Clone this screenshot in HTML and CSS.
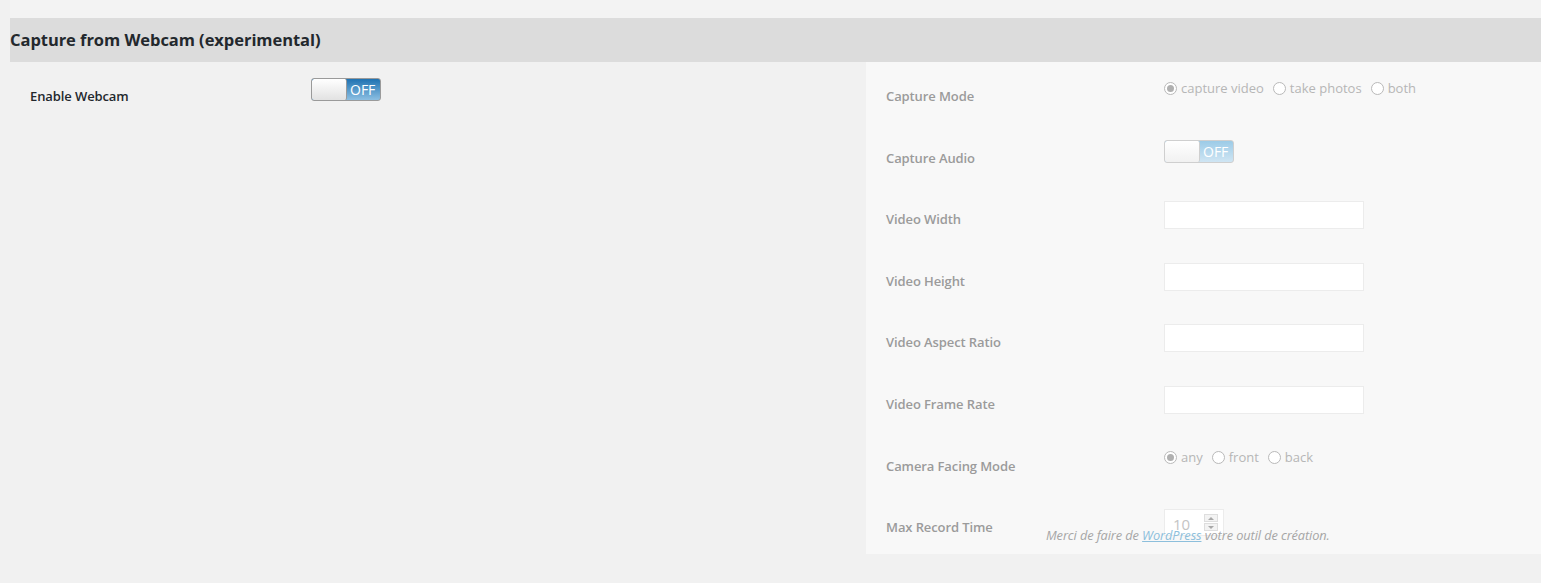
FILE: index.html
```html
<!DOCTYPE html><html lang="fr">
<head>
  <meta charset="UTF-8" />
  <title>Capture from Webcam</title>
  <link rel="stylesheet" href="styles.css">
</head>
<body>
<div class="wrap">
  <div class="top-strip"></div>
  <h2 class="section-title">Capture from Webcam (experimental)</h2>

  <div class="section-body">
    <div class="form-table main-col">
      <div class="row">
        <div class="th">Enable Webcam</div>
        <div class="td"><span class="toggle"><span class="knob"></span><span class="state">OFF</span></span></div>
      </div>
    </div>

    <div class="form-table sub-panel">
      <div class="row">
        <div class="th">Capture Mode</div>
        <div class="td radios">
          <span class="radio checked"></span><span class="opt">capture video</span>
          <span class="radio"></span><span class="opt">take photos</span>
          <span class="radio"></span><span class="opt">both</span>
        </div>
      </div>
      <div class="row">
        <div class="th">Capture Audio</div>
        <div class="td"><span class="toggle faded"><span class="knob"></span><span class="state">OFF</span></span></div>
      </div>
      <div class="row">
        <div class="th">Video Width</div>
        <div class="td"><span class="text-input"></span></div>
      </div>
      <div class="row">
        <div class="th">Video Height</div>
        <div class="td"><span class="text-input"></span></div>
      </div>
      <div class="row">
        <div class="th">Video Aspect Ratio</div>
        <div class="td"><span class="text-input"></span></div>
      </div>
      <div class="row">
        <div class="th">Video Frame Rate</div>
        <div class="td"><span class="text-input"></span></div>
      </div>
      <div class="row">
        <div class="th">Camera Facing Mode</div>
        <div class="td radios">
          <span class="radio checked"></span><span class="opt">any</span>
          <span class="radio"></span><span class="opt">front</span>
          <span class="radio"></span><span class="opt">back</span>
        </div>
      </div>
      <div class="row">
        <div class="th">Max Record Time</div>
        <div class="td">
          <span class="number-input"><span class="num">10</span><span class="spin"><span class="up"></span><span class="down"></span></span></span>
        </div>
      </div>
    </div>
  </div>

  <p class="footer-thanks">Merci de faire de <a href="#">WordPress</a> votre outil de création.</p>
</div>
</body>
</html>
```

FILE: styles.css
```css
* {
  margin: 0;
  padding: 0;
  box-sizing: border-box;
}
body {
  background: #f1f1f1;
  font-family: "Open Sans", "Noto Sans", sans-serif;
  color: #23282d;
  font-size: 13px;
  overflow: hidden;
}
.wrap {
  position: relative;
  padding-left: 10px;
  height: 583px;
}
.top-strip {
  height: 18px;
  background: #f3f3f3;
}
.section-title {
  background: #dcdcdc;
  height: 44px;
  line-height: 44px;
  font-size: 16.5px;
  font-weight: 700;
  color: #23282d;
  letter-spacing: -0.05px;
}
.section-body {
  display: flex;
}
.form-table {
  padding: 5px 0 0 20px;
}
.main-col {
  width: 856px;
}
.main-col .th {
  width: 281px;
}
.sub-panel {
  flex: 1;
  height: 492px;
  background: #f8f8f8;
}
.sub-panel .th {
  width: 278px;
  color: #9b9b9b;
}
.row {
  display: flex;
  height: 61.6px;
}
.th {
  padding-top: 20px;
  line-height: 19px;
  font-weight: 600;
  letter-spacing: -0.1px;
}
.td {
  padding-top: 11px;
}

/* on/off switch */
.toggle {
  display: flex;
  width: 70px;
  height: 23px;
  border: 1px solid #9a9a9a;
  border-radius: 3px;
  overflow: hidden;
  background: linear-gradient(#1f72b2, #8cbfe2);
}
.toggle .knob {
  width: 35px;
  background: linear-gradient(#ffffff, #e2e2e2);
  border-right: 1px solid #9a9a9a;
  border-radius: 2px;
}
.toggle .state {
  flex: 1;
  color: #fff;
  font-size: 14px;
  line-height: 21px;
  padding-left: 3px;
}
.toggle.faded {
  border-color: #cfcfcf;
  background: linear-gradient(#9ccbe7, #cfe5f3);
}
.toggle.faded .knob {
  background: linear-gradient(#ffffff, #f1f1f1);
  border-right-color: #cfcfcf;
}

/* radio groups */
.radios {
  display: flex;
  align-items: center;
  height: 32px;
  padding-top: 10px;
  align-self: flex-start;
  color: #b6b6b6;
}
.radio {
  width: 13px;
  height: 13px;
  border: 1px solid #b9b9b9;
  border-radius: 50%;
  background: #fff;
  display: flex;
  align-items: center;
  justify-content: center;
}
.radio.checked::after {
  content: "";
  width: 7px;
  height: 7px;
  border-radius: 50%;
  background: #b0b0b0;
}
.opt {
  margin: 0 9px 0 4px;
  line-height: 19px;
}

/* text fields */
.text-input {
  display: block;
  width: 200px;
  height: 28px;
  background: #fff;
  border: 1px solid #ececec;
}
.number-input {
  display: flex;
  align-items: center;
  width: 60px;
  height: 27px;
  background: #fff;
  border: 1px solid #ececec;
  color: #c4c4c4;
  font-size: 15px;
  padding-left: 8px;
}
.num {
  flex: 1;
  padding-top: 3px;
}
.spin {
  display: flex;
  flex-direction: column;
  gap: 1px;
  margin-right: 5px;
}
.spin span {
  width: 14px;
  height: 8px;
  border: 1px solid #dedede;
  background: #f3f3f3;
  display: flex;
  align-items: center;
  justify-content: center;
}
.spin .up::after {
  content: "";
  border: 3px solid transparent;
  border-bottom: 3px solid #a8a8a8;
  border-top: 0;
}
.spin .down::after {
  content: "";
  border: 3px solid transparent;
  border-top: 3px solid #a8a8a8;
  border-bottom: 0;
}

/* admin footer, drawn over the panel */
.footer-thanks {
  position: absolute;
  left: 1046px;
  top: 526px;
  font-style: italic;
  font-size: 12.8px;
  color: #a6a6a6;
  letter-spacing: -0.1px;
}
.footer-thanks a {
  color: #8dbfdc;
}
```
